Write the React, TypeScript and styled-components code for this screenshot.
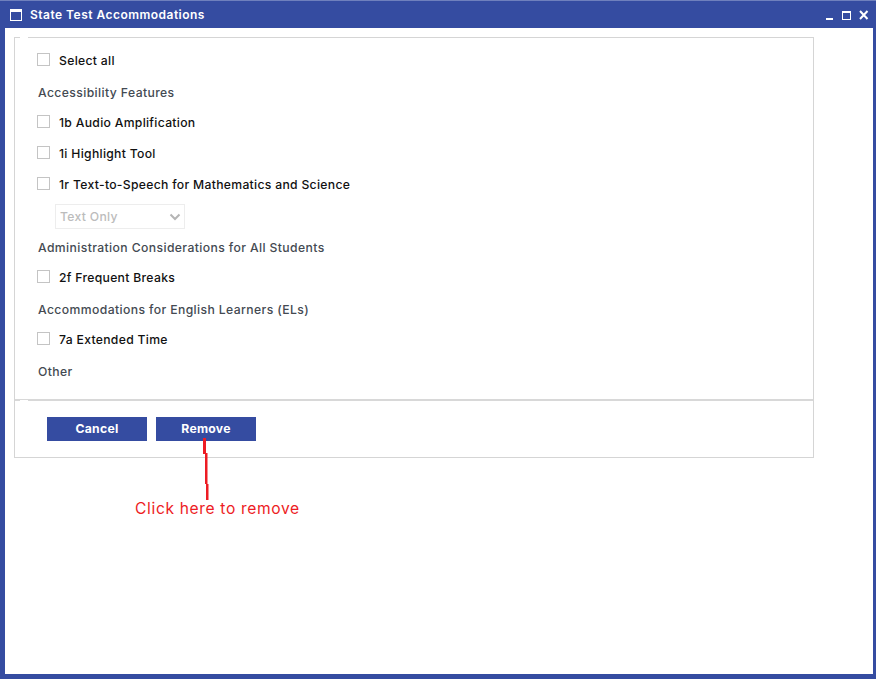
import React from "react";
import styled, { createGlobalStyle } from "styled-components";

const Global = createGlobalStyle`
  html, body { margin: 0; padding: 0; background: #fff; }
  * { box-sizing: border-box; }
  #root { width: 876px; height: 679px; overflow: hidden; position: relative; }
`;

const fontStack = `Inter, "Noto Sans", "Liberation Sans", sans-serif`;

const Win = styled.div`
  width: 876px;
  height: 679px;
  display: flex;
  flex-direction: column;
  background: #354ca1;
  padding: 0 3px 5px 5px;
  font-family: ${fontStack};
  border-top: 1px solid #6f80bd;
`;
const TitleBar = styled.div`
  height: 27px;
  flex: none;
  display: flex;
  align-items: center;
  margin-left: -5px;
  margin-right: -3px;
  padding: 0 7px 0 10px;
`;
const TitleIcon = styled.svg`
  width: 12px;
  height: 12px;
  flex: none;
  display: block;
  margin-top: 1px;
`;
const Title = styled.div`
  margin-left: 8px;
  color: #fff;
  font-size: 12px;
  font-weight: 600;
  letter-spacing: 0.48px;
  flex: 1;
`;
const Controls = styled.div`
  display: flex;
  align-items: center;
  gap: 8px;
  margin-top: 1px;
`;
const Control = styled.svg`
  display: block;
  height: 10px;
  flex: none;
`;
const Body = styled.div`
  flex: 1;
  background: #fff;
  padding: 9px 0 0 9px;
`;
const Panel = styled.div`
  width: 800px;
  height: 421px;
  border: 1px solid #d5d5d5;
  display: flex;
  flex-direction: column;
  position: relative;
  &::before {
    content: "";
    position: absolute;
    left: 5px;
    top: -1px;
    width: 8px;
    height: 1px;
    background: #fff;
  }
`;
const Form = styled.div`
  height: 363px;
  flex: none;
  padding: 13px 0 0 22px;
  display: flex;
  flex-direction: column;
  border-bottom: 2px solid #d8d8d8;
  position: relative;
  &::after {
    content: "";
    position: absolute;
    left: 5px;
    bottom: -2px;
    width: 8px;
    height: 1px;
    background: #fff;
  }
`;
const Row = styled.label<{ $after?: number }>`
  display: flex;
  align-items: center;
  height: 18px;
  color: #111;
  font-size: 12.2px;
  font-weight: 500;
  letter-spacing: 0.3px;
  margin-bottom: ${(p) => p.$after ?? 13}px;
`;
const Box = styled.span`
  width: 13px;
  height: 13px;
  border: 1px solid #c4c4c4;
  background: #fff;
  flex: none;
  margin-right: 9px;
  position: relative;
  top: -1px;
`;
const Heading = styled.div`
  height: 18px;
  line-height: 18px;
  color: #444a52;
  font-size: 12.2px;
  font-weight: 500;
  letter-spacing: 0.39px;
  margin-left: 1px;
  margin-bottom: 11px;
`;
const Select = styled.div`
  width: 130px;
  height: 25px;
  margin: 0 0 10px 18px;
  border: 1px solid #ededed;
  display: flex;
  align-items: center;
  justify-content: space-between;
  padding: 0 3px 0 4px;
  color: #bcbcbc;
  font-size: 12.2px;
  font-weight: 500;
  letter-spacing: 0.3px;
`;
const Footer = styled.div`
  display: flex;
  gap: 9px;
  padding: 16px 0 0 32px;
`;
const Button = styled.button`
  width: 100px;
  height: 24px;
  border: none;
  background: #354ca1;
  color: #fff;
  font-family: ${fontStack};
  font-size: 12.2px;
  font-weight: 700;
  letter-spacing: 0.25px;
  padding: 0 0 2px;
`;
const Pointer = styled.svg`
  position: absolute;
  left: 200px;
  top: 437px;
  width: 12px;
  height: 64px;
`;
const Note = styled.div`
  position: absolute;
  left: 135px;
  top: 499px;
  color: #ed1c24;
  font-family: ${fontStack};
  font-size: 15.6px;
  line-height: 20px;
  font-weight: 400;
  letter-spacing: 0.65px;
  white-space: nowrap;
`;

export default function App() {
  return (
    <>
      <Global />
      <Win>
        <TitleBar>
          <TitleIcon viewBox="0 0 12 12">
            <rect x="0.5" y="0.5" width="11" height="11" fill="none" stroke="#fff" />
            <rect x="0" y="0" width="12" height="3" fill="#fff" />
          </TitleIcon>
          <Title>State Test Accommodations</Title>
          <Controls>
            <Control width="8" viewBox="0 0 8 10"><rect x="0" y="8" width="7" height="2" fill="#fff" /></Control>
            <Control width="9" viewBox="0 0 9 10"><rect x="0.5" y="1.500" width="8" height="8" fill="none" stroke="#fff" /><rect x="0" y="1" width="9" height="2" fill="#fff" /></Control>
            <Control width="10" viewBox="0 0 10 10"><path d="M1 1l7.500 8M8.500 1L1 9" stroke="#fff" strokeWidth="2" /></Control>
          </Controls>
        </TitleBar>
        <Body>
          <Panel>
            <Form>
              <Row $after={15}><Box />Select all</Row>
              <Heading>Accessibility Features</Heading>
              <Row><Box />1b Audio Amplification</Row>
              <Row><Box />1i Highlight Tool</Row>
              <Row $after={11}><Box />1r Text-to-Speech for Mathematics and Science</Row>
              <Select>
                Text Only
                <svg width="12" height="8" viewBox="0 0 12 8"><path d="M1.500 1.500L6 6l4.500-4.500" fill="none" stroke="#b5b5b5" strokeWidth="2" /></svg>
              </Select>
              <Heading>Administration Considerations for All Students</Heading>
              <Row $after={15}><Box />2f Frequent Breaks</Row>
              <Heading>Accommodations for English Learners (ELs)</Heading>
              <Row $after={15}><Box />7a Extended Time</Row>
              <Heading>Other</Heading>
            </Form>
            <Footer>
              <Button>Cancel</Button>
              <Button>Remove</Button>
            </Footer>
          </Panel>
        </Body>
      </Win>
      <Pointer viewBox="0 0 12 64">
        <path d="M3 1h3v16H3zM5 16h2.500v31H5zM6 47h2.500v16H6z" fill="#ed1c24" />
      </Pointer>
      <Note>Click here to remove</Note>
    </>
  );
}
